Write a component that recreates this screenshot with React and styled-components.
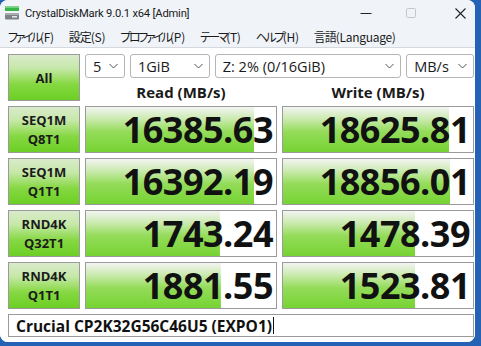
import React from "react";
import styled, { createGlobalStyle } from "styled-components";

const GlobalStyle = createGlobalStyle`
  html, body {
    margin: 0;
    padding: 0;
    background: #2561b4;
  }
  body {
    font-family: "Open Sans", "Noto Sans CJK JP", sans-serif;
    width: 481px;
    height: 346px;
    overflow: hidden;
  }
`;

const rows = [
  { l1: "SEQ1M", l2: "Q8T1", read: "16385.63", rp: 88.5, write: "18625.81", wp: 87.5 },
  { l1: "SEQ1M", l2: "Q1T1", read: "16392.19", rp: 88.5, write: "18856.01", wp: 88 },
  { l1: "RND4K", l2: "Q32T1", read: "1743.24", rp: 70.5, write: "1478.39", wp: 69.5 },
  { l1: "RND4K", l2: "Q1T1", read: "1881.55", rp: 71, write: "1523.81", wp: 69.5 },
];

const menus = [
  { jp: "ファイル", key: "(F)", kana: true },
  { jp: "設定", key: "(S)" },
  { jp: "プロファイル", key: "(P)", kana: true },
  { jp: "テーマ", key: "(T)", kana: true },
  { jp: "ヘルプ", key: "(H)", kana: true },
  { jp: "言語", key: "(Language)" },
];

export default function App() {
  return (
    <>
      <GlobalStyle />
      <Window>
        <TitleBar>
          <AppIcon />
          <Title>CrystalDiskMark 9.0.1 x64 [Admin]</Title>
          <Controls>
            <Ctl $w={46}>
              <svg width="12" height="12" viewBox="0 0 12 12">
                <path d="M0.5 6.5h11" stroke="#222" strokeWidth="1" />
              </svg>
            </Ctl>
            <Ctl $w={44}>
              <svg width="10" height="10" viewBox="0 0 10 10">
                <rect x="0.5" y="0.5" width="9" height="9" rx="1" fill="none" stroke="#c4c6c9" />
              </svg>
            </Ctl>
            <Ctl $w={30} $ml={12}>
              <svg width="11" height="11" viewBox="0 0 11 11">
                <path d="M0.5 0.5l10 10M10.5 0.5l-10 10" stroke="#222" strokeWidth="1.1" />
              </svg>
            </Ctl>
          </Controls>
        </TitleBar>
        <MenuBar>
          {menus.map((m) => (
            <MenuItem key={m.key}>
              <MenuJp $kana={m.kana}>{m.jp}</MenuJp>
              {m.key}
            </MenuItem>
          ))}
        </MenuBar>
        <Content>
          <Grid>
            <AllButton>All</AllButton>
            <Selects>
              <Select $w={40}>5<Chevron /></Select>
              <Select $w={80}>1GiB<Chevron /></Select>
              <Select $w={187}>Z: 2% (0/16GiB)<Chevron /></Select>
              <Select $w={68}>MB/s<Chevron /></Select>
            </Selects>
            <Header>Read (MB/s)</Header>
            <Header>Write (MB/s)</Header>
            {rows.map((r) => (
              <React.Fragment key={r.l1 + r.l2}>
                <Label>
                  <span>{r.l1}</span>
                  <span>{r.l2}</span>
                </Label>
                <Result style={{ backgroundSize: `${r.rp}% 100%` }}>{r.read}</Result>
                <Result style={{ backgroundSize: `${r.wp}% 100%` }}>{r.write}</Result>
              </React.Fragment>
            ))}
            <Comment>
              Crucial CP2K32G56C46U5 (EXPO1)
              <Caret />
            </Comment>
          </Grid>
        </Content>
      </Window>
    </>
  );
}

function AppIcon() {
  return (
    <IconWrap>
      <svg width="16" height="16" viewBox="0 0 16 16">
        <rect x="1" y="1.5" width="14" height="4.5" fill="#38b54a" />
        <rect x="1" y="1.5" width="14" height="1.5" fill="#6fd27a" />
        <rect x="1" y="8" width="14" height="6.5" rx="1" fill="#7d8287" />
        <rect x="1" y="8" width="14" height="2" fill="#a8adb2" />
        <rect x="8" y="11" width="5" height="1.5" fill="#e8e8e8" />
      </svg>
    </IconWrap>
  );
}

function Chevron() {
  return (
    <ChevronWrap>
      <svg width="9" height="6" viewBox="0 0 9 6">
        <path d="M0.5 1l4 4 4-4" fill="none" stroke="#555" strokeWidth="1" />
      </svg>
    </ChevronWrap>
  );
}

const Window = styled.div`
  width: 475px;
  height: 342px;
  background: #ffffff;
  border-radius: 8px;
  overflow: hidden;
  display: flex;
  flex-direction: column;
`;

const TitleBar = styled.div`
  height: 26px;
  background: #f0f4f9;
  display: flex;
  align-items: center;
`;

const IconWrap = styled.div`
  width: 16px;
  height: 16px;
  margin-left: 4px;
  display: flex;
`;

const Title = styled.div`
  margin-left: 5px;
  font-family: "Roboto", sans-serif;
  font-size: 11.2px;
  letter-spacing: -0.2px;
  color: #1a1a1a;
  flex: 1;
`;

const Controls = styled.div`
  display: flex;
  align-items: center;
  height: 100%;
`;

const Ctl = styled.div`
  width: ${(p) => p.$w}px;
  margin-left: ${(p) => p.$ml || 0}px;
  height: 100%;
  display: flex;
  align-items: center;
  justify-content: center;
`;

const MenuBar = styled.div`
  height: 21px;
  background: #f0f4f9;
  display: flex;
  align-items: center;
  padding-left: 8px;
  gap: 15px;
  border-bottom: 1px solid #d5d9de;
`;

const MenuItem = styled.div`
  font-family: "Noto Sans CJK JP", "Noto Sans", sans-serif;
  font-size: 12px;
  font-feature-settings: "palt";
  color: #1a1a1a;
  letter-spacing: -0.3px;
  white-space: nowrap;
`;

const MenuJp = styled.span`
  letter-spacing: ${(p) => (p.$kana ? "-2.4px" : "-1px")};
`;

const Content = styled.div`
  flex: 1;
  background: #ffffff;
`;

const Grid = styled.div`
  display: grid;
  grid-template-columns: 72px 192px 192px;
  grid-template-rows: 24px 18px repeat(4, 47px) 23px;
  column-gap: 5px;
  row-gap: 5px;
  padding: 6px 0 0 8px;
`;

const greenButton = `
  background: linear-gradient(to bottom, #d9ebcb 0%, #c6e8a8 30%, #86d842 65%, #6ccf24 100%);
  border: 1px solid #9a9a9a;
  box-sizing: border-box;
  color: #1b1b1b;
  font-family: "Open Sans", sans-serif;
  font-weight: 700;
`;

const AllButton = styled.div`
  ${greenButton}
  grid-row: 1 / span 2;
  display: flex;
  align-items: center;
  justify-content: center;
  font-size: 13px;
`;

const Selects = styled.div`
  grid-column: 2 / span 2;
  display: flex;
  gap: 5px;
`;

const Select = styled.div`
  width: ${(p) => p.$w}px;
  height: 24px;
  box-sizing: border-box;
  border: 1px solid #b5b5b5;
  border-radius: 3px;
  background: #fff;
  display: flex;
  align-items: center;
  padding: 0 6px 0 7px;
  font-family: "Open Sans", sans-serif;
  font-size: 14.5px;
  color: #1a1a1a;
`;

const ChevronWrap = styled.span`
  margin-left: auto;
  display: flex;
`;

const Header = styled.div`
  display: flex;
  align-items: flex-end;
  justify-content: center;
  font-family: "Open Sans", sans-serif;
  font-weight: 700;
  font-size: 15px;
  line-height: 20px;
  color: #1a1a1a;
  margin-bottom: -1px;
`;

const Label = styled.div`
  ${greenButton}
  display: flex;
  flex-direction: column;
  align-items: center;
  justify-content: center;
  font-size: 13px;
  line-height: 19px;
`;

const Result = styled.div`
  box-sizing: border-box;
  border: 1px solid #9a9a9a;
  background-color: #ffffff;
  background-image: linear-gradient(to bottom, #f3f4f2 0%, #cdebb3 25%, #94dc5a 55%, #76d332 100%);
  background-repeat: no-repeat;
  background-position: left top;
  display: flex;
  align-items: center;
  justify-content: flex-end;
  padding-right: 3px;
  font-family: "Open Sans", sans-serif;
  font-weight: 700;
  font-size: 36px;
  letter-spacing: -0.5px;
  color: #111;
`;

const Comment = styled.div`
  grid-column: 1 / span 3;
  box-sizing: border-box;
  border: 1px solid #9a9a9a;
  display: flex;
  align-items: center;
  padding-left: 7px;
  font-family: "Open Sans", sans-serif;
  font-weight: 700;
  font-size: 15.5px;
  color: #111;
`;

const Caret = styled.span`
  width: 1px;
  height: 17px;
  background: #111;
  margin-left: 1px;
`;
